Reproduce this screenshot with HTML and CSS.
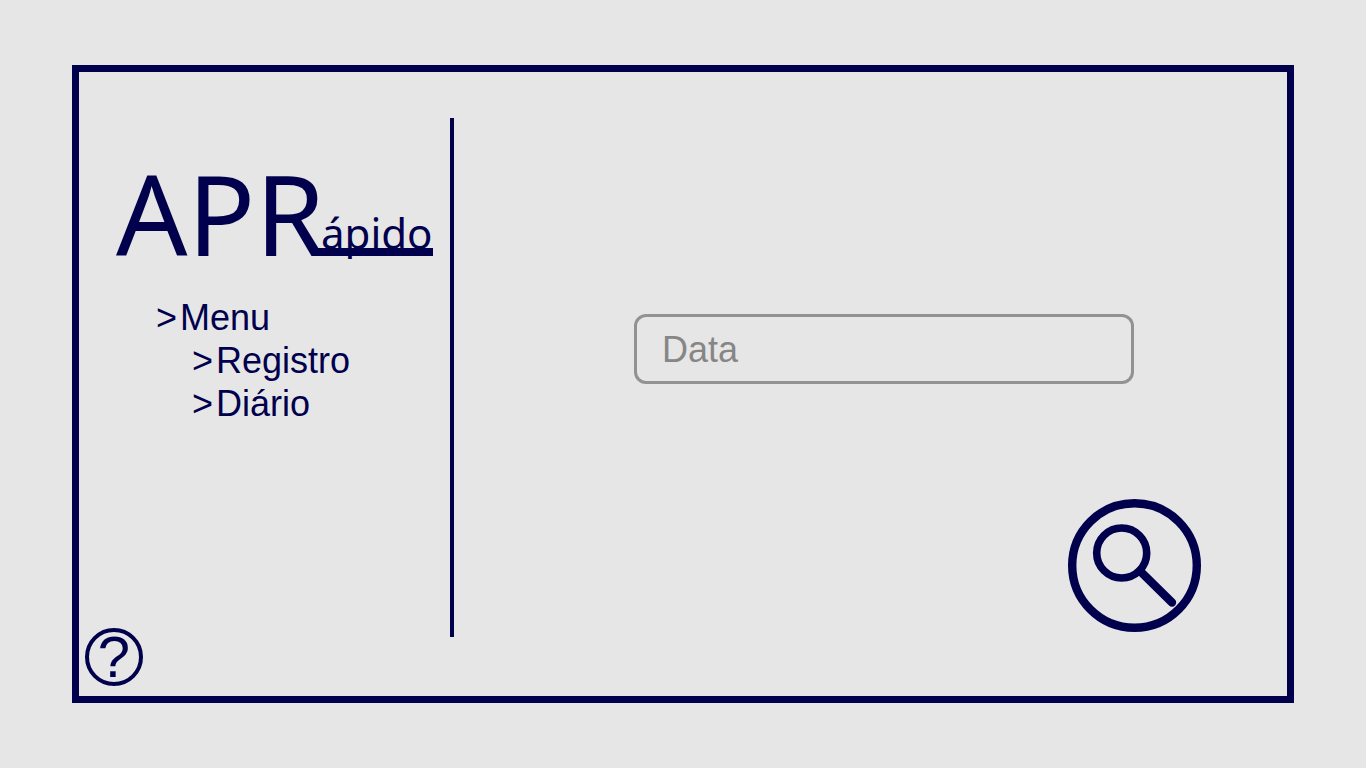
FILE: index.html
```
<!DOCTYPE html>
<html lang="pt-BR">
<head>
  <meta charset="utf-8">
  <meta name="viewport" content="width=device-width, initial-scale=1">
  <title>APRápido</title>
  <link rel="stylesheet" href="styles.css">
</head>
<body>
  <div class="frame">
    <aside class="sidebar">
      <svg class="logo" viewBox="0 0 320 110" role="img" aria-label="APRápido">
        <path class="logo-bar" d="M196 88H317V96H200Z"/>
        <text class="logo-main" x="0" y="96">APR</text>
        <text class="logo-small" x="205" y="89">ápido</text>
      </svg>
      <nav class="menu" aria-label="Menu">
        <a class="menu-link" href="#menu"><span class="marker">&gt;</span><span>Menu</span></a>
        <ul class="submenu">
          <li><a class="menu-link" href="#registro"><span class="marker">&gt;</span><span>Registro</span></a></li>
          <li><a class="menu-link" href="#diario"><span class="marker">&gt;</span><span>Diário</span></a></li>
        </ul>
      </nav>
      <button class="help" type="button" title="Ajuda">?</button>
    </aside>
    <div class="divider"></div>
    <main class="content">
      <input class="field" type="text" name="data" placeholder="Data" aria-label="Data">
      <button class="search" type="button" aria-label="Pesquisar">
        <svg class="search-icon" viewBox="0 0 133 133" aria-hidden="true">
          <circle cx="66.5" cy="66.5" r="62.3" stroke-width="8.4"/>
          <circle cx="53.7" cy="54" r="25" stroke-width="7.6"/>
          <path d="M72 72L104 103.5" stroke-width="8.4" stroke-linecap="round"/>
        </svg>
      </button>
    </main>
  </div>
</body>
</html>
```
FILE: styles.css
```
:root {
  --navy: #00004d;
  --paper: #e6e6e6;
  --grey: #929292;
}

* {
  box-sizing: border-box;
}

body {
  margin: 0;
  padding: 65px 72px;
  background: var(--paper);
  color: var(--navy);
  font-family: "Liberation Sans", Arial, sans-serif;
}

.frame {
  display: grid;
  grid-template-columns: 371px 4px minmax(0, 1fr);
  min-height: calc(100vh - 130px);
  border: 7px solid var(--navy);
}

.sidebar {
  display: flex;
  flex-direction: column;
  align-items: flex-start;
  padding: 88px 0 10px;
}

.logo {
  width: 320px;
  margin-left: 37px;
  overflow: visible;
  fill: var(--navy);
  font-family: "Noto Sans", "Open Sans", sans-serif;
}

.logo-main {
  font-size: 112px;
}

.logo-small {
  font-size: 42px;
}

.menu {
  margin: 26px 0 0 77px;
  font-size: 36px;
  line-height: 43px;
}

.menu-link {
  display: flex;
  gap: 3px;
  color: inherit;
  text-decoration: none;
}

.submenu {
  margin: 0;
  padding: 0 0 0 36px;
  list-style: none;
}

.help {
  display: flex;
  align-items: center;
  justify-content: center;
  width: 58px;
  height: 58px;
  margin: auto 0 0 6px;
  padding: 0;
  border: 4px solid var(--navy);
  border-radius: 50%;
  background: none;
  color: inherit;
  font: 58px/50px "Liberation Sans", Arial, sans-serif;
}

.divider {
  margin: 46px 0 59px;
  background: var(--navy);
}

.content {
  display: flex;
  flex-direction: column;
  padding: 242px 86px 64px 180px;
}

.field {
  height: 70px;
  min-width: 0;
  margin-right: 67px;
  padding: 2px 25px 0;
  border: 3px solid var(--grey);
  border-radius: 12px;
  background: none;
  color: var(--navy);
  font: 36px "Liberation Sans", Arial, sans-serif;
}

.field::placeholder {
  color: #868686;
  opacity: 1;
}

.search {
  align-self: flex-end;
  width: 133px;
  height: 133px;
  margin-top: auto;
  padding: 0;
  border: 0;
  border-radius: 50%;
  background: none;
}

.search-icon {
  display: block;
  fill: none;
  stroke: var(--navy);
}
```
